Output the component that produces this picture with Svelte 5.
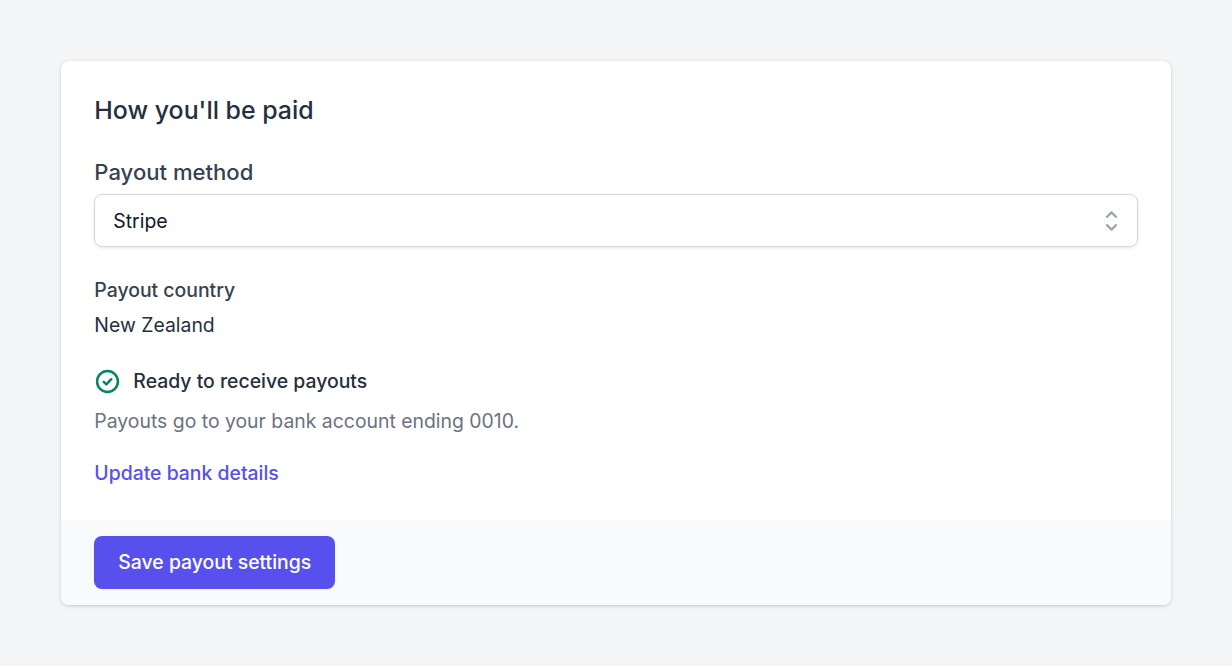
<script lang="ts">
  let method = $state('Stripe');
</script>

<main class="page">
  <section class="card">
    <div class="body">
      <h2>How you'll be paid</h2>

      <label class="method-label" for="payout-method">Payout method</label>
      <div class="select">
        <span>{method}</span>
        <svg viewBox="0 0 20 32" width="15" height="24" aria-hidden="true">
          <path d="M4 10.5 10 4.5l6 6M4 21.5l6 6 6-6" />
        </svg>
      </div>

      <div class="label">Payout country</div>
      <div class="value">New Zealand</div>

      <div class="status">
        <svg viewBox="0 0 24 24" width="25" height="25" aria-hidden="true">
          <circle cx="12" cy="12" r="10" />
          <path d="M8.4 12.3l2.5 2.5 4.7-5" />
        </svg>
        <span>Ready to receive payouts</span>
      </div>
      <p class="hint">Payouts go to your bank account ending 0010.</p>
      <a href="#bank" class="link">Update bank details</a>
    </div>

    <footer>
      <button type="button">Save payout settings</button>
    </footer>
  </section>
</main>

<style>
  :global(body) {
    margin: 0;
    background: #f4f5f7;
    font-family: Inter, "Liberation Sans", sans-serif;
  }

  .page {
    padding: 61px;
    box-sizing: border-box;
    height: 666px;
  }

  .card {
    background: #fff;
    border-radius: 8px;
    overflow: hidden;
    box-shadow: 0 1px 4px rgba(0, 0, 0, 0.14), 0 1px 2px rgba(0, 0, 0, 0.06);
  }

  .body {
    padding: 33px 33.33px 0;
    height: 459px;
    box-sizing: border-box;
  }

  h2 {
    margin: 0;
    font-size: 24.9px;
    line-height: 32px;
    font-weight: 470;
    color: #252f3f;
  }

  .method-label {
    display: block;
    margin-top: 30px;
    font-size: 22.1px;
    line-height: 32px;
    font-weight: 450;
    color: #374151;
  }

  .select {
    display: flex;
    align-items: center;
    justify-content: space-between;
    height: 53px;
    margin-top: 6px;
    padding: 1px 18px 0;
    box-sizing: border-box;
    border: 1.33px solid #d2d6dc;
    border-radius: 8px;
    box-shadow: 0 1px 3px rgba(0, 0, 0, 0.1);
    font-size: 19.4px;
    color: #111827;
  }

  .select svg path {
    fill: none;
    stroke: #9fa6b2;
    stroke-width: 3;
    stroke-linecap: round;
    stroke-linejoin: round;
  }

  .label {
    margin-top: 29px;
    font-size: 19.4px;
    line-height: 28px;
    font-weight: 450;
    color: #374151;
  }

  .value {
    margin-top: 7px;
    font-size: 19.4px;
    line-height: 28px;
    color: #252f3f;
  }

  .status {
    display: flex;
    align-items: center;
    gap: 13px;
    margin-top: 28px;
    font-size: 19.4px;
    line-height: 28px;
    font-weight: 500;
    color: #252f3f;
  }

  .status svg {
    margin: 1px 0 0 1px;
  }

  .status svg circle,
  .status svg path {
    fill: none;
    stroke: #0a8560;
    stroke-width: 2.4;
    stroke-linecap: round;
    stroke-linejoin: round;
  }

  .hint {
    margin: 12px 0 0;
    font-size: 19.4px;
    line-height: 28px;
    color: #6b7280;
  }

  .link {
    display: block;
    margin-top: 24px;
    font-size: 19.4px;
    line-height: 28px;
    font-weight: 500;
    color: #5850ec;
    text-decoration: none;
  }

  footer {
    background: #f9fafb;
    padding: 16px 33.33px;
  }

  button {
    display: block;
    height: 53px;
    padding: 0 24px 1px;
    border: 0;
    border-radius: 8px;
    background: #5850ec;
    color: #fff;
    font: 470 19.4px Inter, "Liberation Sans", sans-serif;
    box-shadow: 0 1px 2px rgba(0, 0, 0, 0.05);
  }
</style>
